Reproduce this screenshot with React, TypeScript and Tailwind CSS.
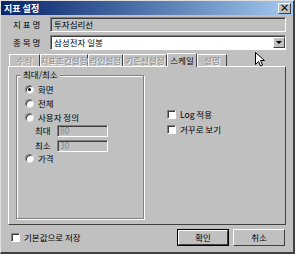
import React from "react";

const sunken =
  "border border-t-[#808080] border-l-[#808080] border-b-white border-r-white shadow-[inset_1px_1px_0_#404040]";

function Radio({ checked, label }: { checked?: boolean; label: string }) {
  return (
    <div className="flex items-center h-[14px]">
      <div className="w-[9px] h-[9px] rounded-full bg-white border border-t-[#808080] border-l-[#808080] border-b-[#e0e0e0] border-r-[#e0e0e0] flex items-center justify-center shadow-[inset_1px_1px_0_#404040]">
        {checked && <div className="w-[3px] h-[3px] rounded-full bg-black" />}
      </div>
      <span className="ml-[4px] leading-none whitespace-nowrap">{label}</span>
    </div>
  );
}

function Check({ label }: { label: string }) {
  return (
    <div className="flex items-center h-[14px]">
      <div className={`w-[9px] h-[9px] bg-white ${sunken}`} />
      <span className="ml-[4px] leading-none whitespace-nowrap">{label}</span>
    </div>
  );
}

function Tab({ label, active, w }: { label: string; active?: boolean; w: string }) {
  return (
    <div
      className={`${w} flex items-center justify-center whitespace-nowrap border border-t-white border-l-white border-r-[#404040] border-b-0 leading-none ${
        active
          ? "text-black h-[14px] relative -mb-px bg-[#c0c0c0] z-10"
          : "h-[12px] text-[#8a8a8a] [text-shadow:1px_1px_0_#fff]"
      }`}
    >
      {label}
    </div>
  );
}

export default function App() {
  return (
    <div
      className="w-[295px] h-[254px] bg-[#c0c0c0] relative overflow-hidden text-[8.5px] text-black border-l border-t border-r-2 border-b-2 border-l-[#e0e0e0] border-t-[#e0e0e0] border-r-[#404040] border-b-[#404040] flex flex-col"
      style={{ fontFamily: '"Noto Sans CJK KR", "Noto Sans", sans-serif' }}
    >
      {/* title bar */}
      <div className="h-[14px] bg-gradient-to-r from-[#0a246a] to-[#a6caf0] flex items-center justify-between pl-[3px] pr-[2px]">
        <span className="text-white font-bold text-[9px] leading-none">지표 설정</span>
        <div className="w-[13px] h-[11px] bg-[#c0c0c0] border border-t-white border-l-white border-r-[#404040] border-b-[#404040] flex items-center justify-center text-[10px] font-bold leading-none">
          ×
        </div>
      </div>

      <div className="flex flex-col px-[7px] pt-[2px]">
        {/* rows */}
        <div className="flex items-center h-[15px]">
          <span className="w-[42px] pl-[5px] leading-none whitespace-nowrap">지 표 명</span>
          <div className={`flex-1 h-[15px] bg-[#c0c0c0] ${sunken} flex items-center pl-[3px] leading-none`}>
            투자심리선
          </div>
        </div>
        <div className="flex items-center h-[15px] mt-[3px]">
          <span className="w-[42px] pl-[5px] leading-none whitespace-nowrap">종 목 명</span>
          <div className={`flex-1 h-[15px] bg-white ${sunken} flex items-center justify-between pl-[3px] leading-none`}>
            <span>삼성전자 일봉</span>
            <div className="w-[12px] h-[11px] bg-[#c0c0c0] border border-t-white border-l-white border-r-[#404040] border-b-[#404040] flex items-center justify-center">
              <svg width="6" height="4" viewBox="0 0 6 4">
                <path d="M0 0h6L3 3z" fill="#000" />
              </svg>
            </div>
          </div>
        </div>

        {/* tabs */}
        <div className="flex items-end mt-[2px] pl-[1px] h-[14px]">
          <Tab w="w-[31px]" label="수식" />
          <Tab w="w-[48px]" label="지표조건설정" />
          <Tab w="w-[35px]" label="라인설정" />
          <Tab w="w-[44px]" label="기준선설정" />
          <Tab w="w-[30px]" label="스케일" active />
          <Tab w="w-[30px]" label="설명" />
        </div>

        {/* panel */}
        <div className="h-[159px] border border-t-white border-l-white border-r-[#404040] border-b-[#404040] flex pl-[7px] pt-[8px] pr-[6px]">
          <div className="w-[128px] h-[144px] relative border border-[#808080] shadow-[1px_1px_0_#fff,inset_1px_1px_0_#fff] flex flex-col pl-[8px] pt-[6px]">
            <span className="absolute -top-[6px] left-[4px] px-[2px] bg-[#c0c0c0] leading-none whitespace-nowrap">최대/최소</span>
            <div className="flex flex-col">
              <Radio checked label="화면" />
              <Radio label="전체" />
              <Radio label="사용자 정의" />
            </div>
            <div className="flex items-center pl-[10px] h-[13px]">
              <span className="w-[22px] leading-none">최대</span>
              <div className={`w-[51px] h-[12px] bg-[#c0c0c0] ${sunken} flex items-center pl-[2px] text-[#8a8a8a] leading-none`}>80</div>
            </div>
            <div className="flex items-center mt-[2px] pl-[10px] h-[13px]">
              <span className="w-[22px] leading-none">최소</span>
              <div className={`w-[51px] h-[12px] bg-[#c0c0c0] ${sunken} flex items-center pl-[2px] text-[#8a8a8a] leading-none`}>30</div>
            </div>
            <div className="-mt-[1px]">
              <Radio label="가격" />
            </div>
          </div>
          <div className="flex flex-col ml-[23px] pt-[32px] gap-[1px]">
            <Check label="Log 적용" />
            <Check label="거꾸로 보기" />
          </div>
        </div>

        {/* bottom */}
        <div className="flex items-center justify-between mt-[4px] pl-[3px] pr-[1px]">
          <Check label="기본값으로 저장" />
          <div className="flex gap-[4px]">
            <div className="w-[52px] h-[17px] border border-black flex">
              <div className="flex-1 border border-t-white border-l-white border-r-[#404040] border-b-[#404040] flex items-center justify-center leading-none">
                확인
              </div>
            </div>
            <div className="w-[52px] h-[17px] border border-t-white border-l-white border-r-[#404040] border-b-[#404040] flex items-center justify-center leading-none">
              취소
            </div>
          </div>
        </div>
      </div>

      {/* mouse cursor */}
      <svg className="absolute left-[254px] top-[51px]" width="10" height="15" viewBox="0 0 10 15">
        <path d="M0.5 0.5v12l3-3 2 4.5 2-1-2-4.5h4z" fill="#fff" stroke="#000" strokeWidth="1" />
      </svg>
    </div>
  );
}
